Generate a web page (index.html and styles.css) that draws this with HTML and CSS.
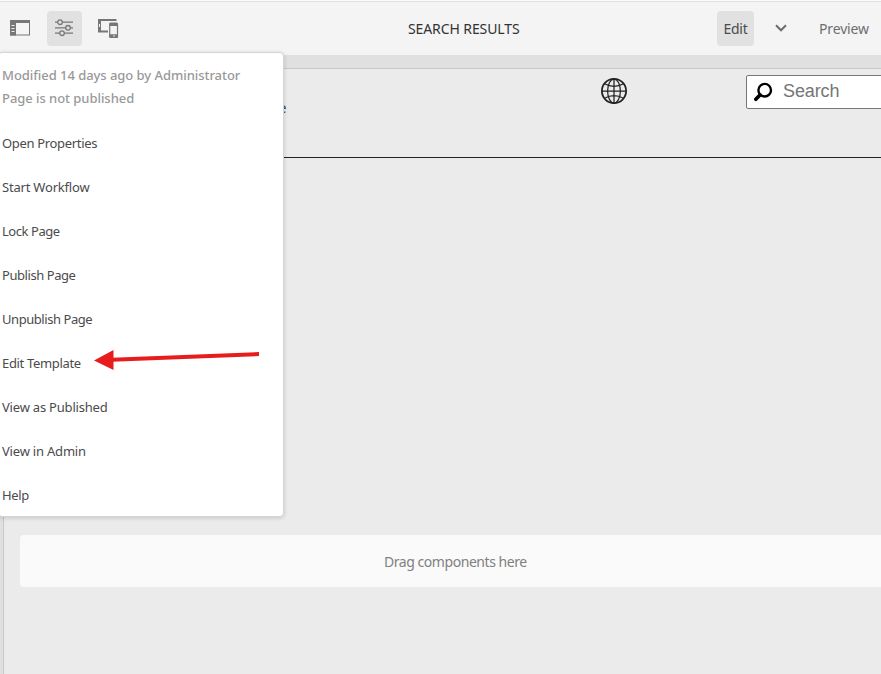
FILE: index.html
```html
<!DOCTYPE html>
<html lang="en">
<head>
<meta charset="utf-8">
<title>Search Results</title>
<link rel="stylesheet" href="styles.css">
</head>
<body>
<header class="toolbar">
  <div class="tools">
    <button class="tool" aria-label="Side panel">
      <svg width="22" height="20" viewBox="0 0 22 20"><rect x="1.5" y="2.8" width="19" height="14.2" fill="none" stroke="#777" stroke-width="1"/><path d="M1 2h20v3H1zM1 5h6v12.5H1z" fill="#777"/><path d="M2.5 7.5h3M2.5 10.5h3M2.5 13.5h3" stroke="#eee"/></svg>
    </button>
    <button class="tool selected" aria-label="Page information">
      <svg width="20" height="20" viewBox="0 0 20 20" fill="none" stroke="#777" stroke-width="1.3"><path d="M1 4.2h2.6M8.4 4.2H19M1 9.8h10.6M16.4 9.8H19M1 15.2h4.6M10.4 15.2H19"/><circle cx="6" cy="4.2" r="2.3"/><circle cx="14" cy="9.8" r="2.3"/><circle cx="8" cy="15.2" r="2.3"/></svg>
    </button>
    <button class="tool" aria-label="Emulator">
      <svg width="22" height="22" viewBox="0 0 22 22"><path d="M1 2h3v13.5H1zM1 2h18.5v2H1zM1 13.5h10v2H1z" fill="#777"/><path d="M2.5 7v3" stroke="#f4f4f4"/><rect x="12.7" y="6.2" width="7.8" height="14.2" rx="1" fill="#f4f4f4" stroke="#777" stroke-width="1.2"/><path d="M12.5 6h8.5v3h-8.5zM12.5 17.3h8.5v3.5h-8.5z" fill="#777"/><path d="M16 19h1.8" stroke="#eee"/></svg>
    </button>
  </div>
  <h1 class="title">SEARCH RESULTS</h1>
  <div class="modes">
    <button class="mode selected">Edit</button>
    <svg class="chevron" width="12" height="8" viewBox="0 0 12 8"><path d="M1 1.2l5 5 5-5" fill="none" stroke="#6e6e6e" stroke-width="2.1"/></svg>
    <span class="preview">Preview</span>
  </div>
</header>
<main class="page">
  <div class="site-header">
    <span class="brand">e</span>
    <svg class="globe" width="28" height="28" viewBox="0 0 28 28" fill="none" stroke="#222" stroke-width="1.25"><circle cx="14" cy="14" r="12.1" stroke-width="1.8"/><ellipse cx="14" cy="14" rx="6.4" ry="12"/><path d="M14 2v24M2 14h24M4.5 6.8Q14 11.8 23.5 6.8M4.5 21.2Q14 16.2 23.5 21.2"/></svg>
    <div class="search">
      <svg width="20" height="20" viewBox="0 0 20 20" fill="none" stroke="#000"><circle cx="11.7" cy="8.2" r="6.3" stroke-width="2.4"/><path d="M7 13l-4.2 4.2" stroke-width="3.7" stroke-linecap="round"/></svg>
      <span>Search</span>
    </div>
  </div>
  <div class="dropzone"><span>Drag components here</span></div>
</main>
<nav class="menu">
  <div class="info"><p class="modified">Modified 14 days ago by Administrator</p><p class="status">Page is not published</p></div>
  <ul>
    <li>Open Properties</li>
    <li class="loose">Start Workflow</li>
    <li class="tight">Lock Page</li>
    <li class="tight">Publish Page</li>
    <li class="tight">Unpublish Page</li>
    <li>Edit Template</li>
    <li class="loose">View as Published</li>
    <li class="loose">View in Admin</li>
    <li>Help</li>
  </ul>
  <svg class="arrow" width="168" height="24" viewBox="0 0 168 24" fill="#e81c1c"><path d="M1 14.5L20.5 4v20zM19 11.8l147-5.7v4L19 15.7z"/></svg>
</nav>
</body>
</html>
```
FILE: styles.css
```css
* { box-sizing: border-box; }
body {
  margin: 0;
  height: 674px;
  overflow: hidden;
  position: relative;
  display: flex;
  flex-direction: column;
  background: #e0e0e0;
  font-family: "Noto Sans", sans-serif;
  color: #4b4b4b;
}
button { border: 0; padding: 0; background: none; font: inherit; color: inherit; }
svg { display: block; flex: none; }
.toolbar {
  height: 55px;
  flex: none;
  display: grid;
  grid-template-columns: 408px 309px 164px;
  align-items: center;
  background: #f4f4f4;
  border-top: 1px solid #fafafa;
  box-shadow: inset 0 1px #e1e1e1;
}
.tools { display: flex; gap: 9px; padding-left: 3px; }
.tool {
  width: 35px;
  height: 35px;
  padding-right: 2px;
  display: flex;
  align-items: center;
  justify-content: center;
  border-radius: 4px;
}
.selected { background: #e1e1e1; }
.title { margin: 0; font-size: 14px; font-weight: 400; letter-spacing: -.1px; color: #323232; white-space: nowrap; }
.modes { display: flex; align-items: center; font-size: 14px; }
.mode { width: 37px; height: 35px; border-radius: 4px; letter-spacing: -.3px; }
.chevron { margin-left: 21px; }
.preview { margin-left: 32px; color: #6e6e6e; letter-spacing: -.15px; }
.page {
  flex: 1;
  margin: 13px 0 0 3px;
  border-left: 1px solid #c8c8c8;
  border-top: 1px solid #c8c8c8;
  background: #ebebeb;
}
.site-header {
  height: 89px;
  display: flex;
  align-items: flex-start;
  border-bottom: 1px solid #222;
}
.brand { width: 8px; margin: 28px 0 0 274px; font-size: 15px; color: #345; }
.globe { margin: 8px 0 0 314px; }
.search {
  flex: none;
  width: 150px;
  height: 34px;
  margin: 6px 0 0 118px;
  padding-left: 6px;
  display: flex;
  align-items: center;
  gap: 10px;
  border: 1px solid #767676;
  border-radius: 2px;
  background: #fff;
  color: #757575;
  font: 18px "Liberation Sans", sans-serif;
}
.search span { margin-top: -1px; letter-spacing: -.1px; }
.dropzone {
  height: 52px;
  margin: 377px 0 0 16px;
  padding-left: 364px;
  display: flex;
  align-items: center;
  border-radius: 4px 0 0 4px;
  background: #fafafa;
  color: #808080;
  font-size: 14px;
  letter-spacing: -.45px;
}
.menu {
  position: absolute;
  left: -2px;
  top: 52px;
  width: 286px;
  height: 465px;
  padding: 11px 0 0 3px;
  background: #fff;
  border: 1px solid #d5d5d5;
  border-radius: 4px;
  box-shadow: 0 1px 4px rgba(0, 0, 0, .16);
  font-size: 13px;
}
.info { color: #999; font-weight: 500; line-height: 23px; height: 57px; letter-spacing: -.05px; }
.info p { margin: 0; white-space: nowrap; }
ul { margin: 0; padding: 0; list-style: none; }
li { height: 44px; line-height: 44px; letter-spacing: -.33px; }
.tight { letter-spacing: -.44px; }
.loose { letter-spacing: -.2px; }
.arrow { position: absolute; left: 94px; top: 293px; }
```
